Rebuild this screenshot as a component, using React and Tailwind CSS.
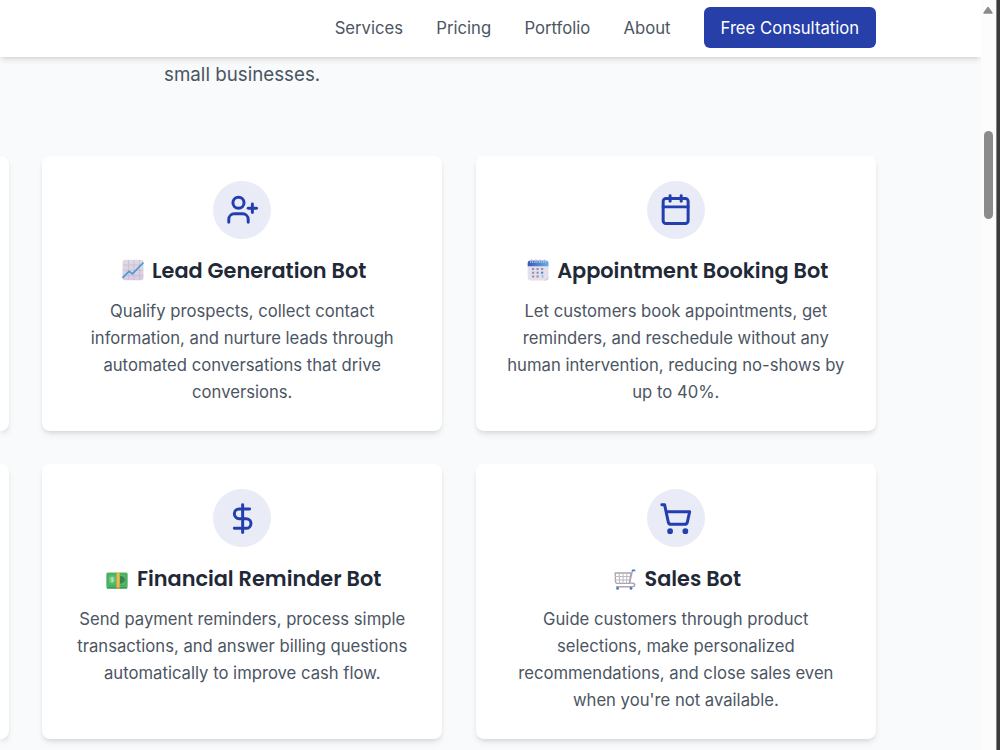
import { UserPlus, Calendar, DollarSign, ShoppingCart } from "lucide-react";

function ChartEmoji() {
  return (
    <svg viewBox="0 0 22 22" className="h-[22px] w-[22px]" aria-hidden="true">
      <defs>
        <linearGradient id="chartBg" x1="0" y1="0" x2="0" y2="1">
          <stop offset="0" stopColor="#dfdbe2" />
          <stop offset="1" stopColor="#d9cbe4" />
        </linearGradient>
      </defs>
      <rect x="0.5" y="0.7" width="21" height="20.6" rx="2.4" fill="url(#chartBg)" />
      <path d="M6.5 1v20M12 1v20M17.5 1v20M1 6h20M1 11.3h20M1 16.6h20" stroke="#c4bacd" strokeWidth="0.7" />
      <path d="M1 18.3 7 12.3l3.4 2.6L21 4" fill="none" stroke="#4b97d8" strokeWidth="1.7" strokeLinejoin="round" strokeLinecap="round" />
    </svg>
  );
}

function CalendarEmoji() {
  return (
    <svg viewBox="0 0 22 22" className="h-[22px] w-[22px]" aria-hidden="true">
      <defs>
        <linearGradient id="calTop" x1="0" x2="1">
          <stop offset="0" stopColor="#3659b9" />
          <stop offset="1" stopColor="#67aee9" />
        </linearGradient>
      </defs>
      <rect x="0.7" y="1.8" width="20.8" height="19.6" rx="3" fill="#e3dfec" />
      <path d="M0.7 7.2V4.4a2.8 2.8 0 0 1 2.8-2.8h15.2a2.8 2.8 0 0 1 2.8 2.8v2.8z" fill="url(#calTop)" />
      <path d="M3.7 4V1.2q1.2-1.2 2 0V4M8 4V1.2q1.2-1.2 2 0V4M12.3 4V1.2q1.2-1.2 2 0V4M16.6 4V1.2q1.2-1.2 2 0V4" fill="none" stroke="#c3cce0" strokeWidth="0.9" />
      <path d="M5 9h2.2v2H5zM9.5 9h2.2v2H9.5zM14 9h2.2v2H14zM5 12.7h2.2v2H5zM9.5 12.7h2.2v2H9.5zM5 16.4h2.2v2H5zM9.5 16.4h2.2v2H9.5z" fill="#9890a7" />
      <rect x="14" y="12.7" width="2.2" height="2" fill="#378cdd" />
      <path d="M14.4 16.5h1.6v1.8h-1.3" fill="none" stroke="#aaa2b8" strokeWidth="0.8" />
      <path d="M16.5 21.3q4.2-1 5-4.6v2.1q-.3 2.2-2.8 2.6z" fill="#cac4d6" />
    </svg>
  );
}

function MoneyEmoji() {
  return (
    <svg viewBox="0 0 22 22" className="mt-[3px] h-[22px] w-[22px]" aria-hidden="true">
      <rect x="0.6" y="4.3" width="20.8" height="15.4" rx="1" fill="#39995a" />
      <rect x="0.6" y="3.6" width="20.8" height="14.5" rx="1" fill="#52bb67" />
      <rect x="2" y="5" width="18" height="11.7" rx="1" fill="none" stroke="#3ca455" strokeWidth="0.8" />
      <circle cx="6.1" cy="10.7" r="3.2" fill="#73c482" />
      <path d="M7.6 8.9q-2.8-1-2.7.5t2.4 1.3q.8 2.2-2.4 1.5M6.2 7.8v5.8" fill="none" stroke="#d3ead0" strokeWidth="0.7" />
      <path d="M14 6.9q4.8.2 4.8 3.7T14 14.8z" fill="#398252" />
      <path d="M10.6 3.6h3v16.1h-3z" fill="#f7b64b" />
      <path d="M10.6 18h3v1.7h-3z" fill="#d78b3c" />
    </svg>
  );
}

function CartEmoji() {
  return (
    <svg viewBox="0 0 22 22" className="mt-[2px] h-[22px] w-[22px]" aria-hidden="true">
      <g fill="none" strokeLinecap="round" strokeLinejoin="round">
        <path d="M1.2 4h15.7l-1.5 10.4H3.1Q1.6 14.4 1.4 12z" stroke="#aaa4ae" strokeWidth="1.3" />
        <path d="M5.2 4.1l.5 10M9.1 4.1v10M13 4.1l-.6 10M1.4 7.5h15M1.6 11h14.2" stroke="#bdb8c2" strokeWidth="1" />
        <path d="M20 1.6h-1.6L15.5 14q5-.1 5.2 1.7.1 2-2.6 2H2.5" stroke="#aca4b5" strokeWidth="1.5" />
        <path d="M18.8 1.4h1.7" stroke="#3d81d1" strokeWidth="1.8" />
      </g>
      <circle cx="3.6" cy="19.4" r="1.4" fill="#4a76cc" />
      <circle cx="17" cy="19.4" r="1.4" fill="#4a76cc" />
    </svg>
  );
}

const cards = [
  {
    Icon: UserPlus,
    Emoji: ChartEmoji,
    title: "Lead Generation Bot",
    lines: ["Qualify prospects, collect contact", "information, and nurture leads through", "automated conversations that drive", "conversions."],
  },
  {
    Icon: Calendar,
    Emoji: CalendarEmoji,
    title: "Appointment Booking Bot",
    lines: ["Let customers book appointments, get", "reminders, and reschedule without any", "human intervention, reducing no-shows by", "up to 40%."],
  },
  {
    Icon: DollarSign,
    Emoji: MoneyEmoji,
    title: "Financial Reminder Bot",
    lines: ["Send payment reminders, process simple", "transactions, and answer billing questions", "automatically to improve cash flow."],
  },
  {
    Icon: ShoppingCart,
    Emoji: CartEmoji,
    title: "Sales Bot",
    lines: ["Guide customers through product", "selections, make personalized", "recommendations, and close sales even", "when you're not available."],
  },
];

const cardShadow = "shadow-[0_4px_6px_-1px_rgba(0,0,0,0.1),0_2px_4px_-2px_rgba(0,0,0,0.1)]";

function Card({ Icon, Emoji, title, lines }) {
  return (
    <article className={`flex h-[275.2px] w-[400.3px] shrink-0 flex-col items-center rounded-[8px] bg-white pt-[25px] ${cardShadow}`}>
      <div className="flex size-[58.4px] shrink-0 items-center justify-center rounded-full bg-[#e9ebf7]">
        <Icon size={33.3} strokeWidth={2.15} color="#233fae" />
      </div>
      <h3 className="mt-[16.7px] flex h-[29.2px] items-center gap-[8.5px] whitespace-nowrap pl-[3.3px] font-['Poppins','Inter',sans-serif] text-[20.83px] font-semibold text-[#1f2937]">
        <Emoji />
        <span>{title}</span>
      </h3>
      <p className="mt-[12.7px] text-center text-[16.67px] leading-[27.08px] whitespace-nowrap text-[#4b5563]">
        {lines.map((line) => (
          <span key={line} className="block">{line}</span>
        ))}
      </p>
    </article>
  );
}

function CardRow({ items }) {
  return (
    <div className="flex gap-[33.3px]">
      <div className={`h-[275.2px] w-[8.8px] shrink-0 rounded-r-[8px] bg-white ${cardShadow}`} />
      {items.map((item) => (
        <Card key={item.title} {...item} />
      ))}
    </div>
  );
}

export default function App() {
  return (
    <div className="flex h-[750px] w-[1000px] overflow-hidden bg-[#f9fafb] font-['Inter',sans-serif]">
      <div className="flex w-[980.5px] shrink-0 flex-col overflow-hidden bg-[#f8fafc]">
        <header className="z-10 flex h-[57px] shrink-0 items-start justify-end bg-white pt-[6.8px] pr-[104.7px] shadow-[0_4px_6px_-1px_rgba(0,0,0,0.1),0_2px_4px_-2px_rgba(0,0,0,0.1)]">
          <nav className="flex h-[41.5px] items-center gap-[33.3px] text-[16.67px] text-[#4b5563]">
            <a className="pt-px">Services</a>
            <a className="pt-px">Pricing</a>
            <a className="pt-px">Portfolio</a>
            <a className="pt-px">About</a>
            <a className="flex h-[41.5px] w-[172px] items-center justify-center rounded-[6px] bg-[#263fa9] pt-px text-white">Free Consultation</a>
          </nav>
        </header>
        <p className="mt-[3px] ml-[164px] h-[30px] shrink-0 text-[18.75px] leading-[30px] text-[#4b5563]">small businesses.</p>
        <main className="mt-[65.7px] flex flex-col gap-[33.1px]">
          <CardRow items={cards.slice(0, 2)} />
          <CardRow items={cards.slice(2)} />
        </main>
      </div>
      <aside className="flex w-[15.5px] shrink-0 flex-col items-center bg-[#fcfcfc] pt-[6px]">
        <svg viewBox="0 0 10 8" className="h-[8px] w-[10px]" aria-hidden="true">
          <path d="M5 1.5 9 7H1z" fill="#8b8b8b" stroke="#8b8b8b" strokeWidth="1.4" strokeLinejoin="round" />
        </svg>
        <div className="mt-[116.7px] h-[88px] w-[9px] rounded-full bg-[#8b8b8b]" />
      </aside>
      <div className="w-[4px] shrink-0 border-l border-[#858585] bg-[#3b3b3b]" />
    </div>
  );
}
